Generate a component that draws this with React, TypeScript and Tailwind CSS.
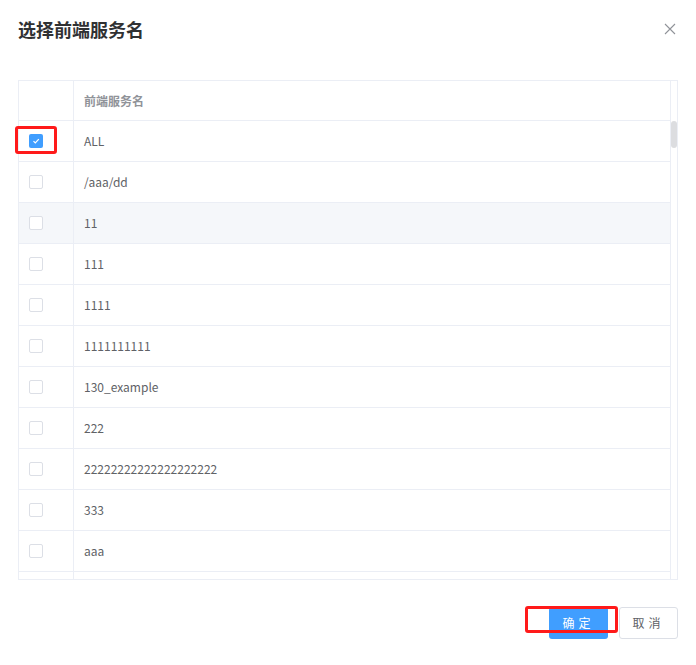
import { useState } from "react";

const rows = [
  "ALL",
  "/aaa/dd",
  "11",
  "111",
  "1111",
  "1111111111",
  "130_example",
  "222",
  "22222222222222222222",
  "333",
  "aaa",
  "",
];

function Checkbox({ checked }: { checked: boolean }) {
  if (checked) {
    return (
      <span className="flex h-[14px] w-[14px] items-center justify-center rounded-[2px] bg-[#409eff]">
        <svg width="10" height="10" viewBox="0 0 10 10" fill="none">
          <path d="M2.5 5.2 L4.3 7 L7.8 3.2" stroke="#fff" strokeWidth="1.2" />
        </svg>
      </span>
    );
  }
  return <span className="block h-[14px] w-[14px] rounded-[2px] border border-[#dcdfe6] bg-white" />;
}

export default function App() {
  const [selected] = useState<string[]>(["ALL"]);

  return (
    <div className="h-[665px] w-[696px] bg-white font-['Noto_Sans_CJK_SC','Noto_Sans',sans-serif] text-[#606266]">
      {/* header */}
      <div className="flex items-center justify-between px-[18px] pt-[16px]">
        <h2 className="text-[18px] font-bold leading-[26px] text-[#303133]">选择前端服务名</h2>
        <button className="mr-[2px] text-[#909399]">
          <svg width="12" height="12" viewBox="0 0 12 12" fill="none">
            <path d="M1 1 L11 11 M11 1 L1 11" stroke="currentColor" strokeWidth="1.1" />
          </svg>
        </button>
      </div>

      {/* table */}
      <div className="relative ml-[18px] mt-[38px] flex h-[500px] w-[660px] border border-[#ebeef5]">
        <div className="flex min-w-0 flex-1 flex-col">
          <div className="flex h-[40px] shrink-0 border-b border-[#ebeef5] text-[12px] font-bold text-[#909399]">
            <div className="w-[55px] shrink-0 border-r border-[#ebeef5]" />
            <div className="flex items-center px-[10px]">前端服务名</div>
          </div>
          <div className="flex-1 overflow-hidden">
            {rows.map((name, i) => (
              <div
                key={i}
                className={`flex h-[41px] border-b border-[#ebeef5] text-[12px] ${i === 2 ? "bg-[#f5f7fa]" : "bg-white"}`}
              >
                <div className="flex w-[55px] shrink-0 items-center border-r border-[#ebeef5] pl-[10px]">
                  <Checkbox checked={selected.includes(name)} />
                </div>
                <div className="flex items-center px-[10px]">{name}</div>
              </div>
            ))}
          </div>
        </div>
        <div className="w-[7px] shrink-0 border-l border-[#ebeef5] pt-[40px]">
          <div className="h-[27px] w-full rounded-[3px] bg-[#dcdde0]" />
        </div>
        {/* highlight around the checked box */}
        <span className="absolute left-[-4px] top-[45px] h-[28px] w-[42px] rounded-[3px] border-[3px] border-[#ff1a1a]" />
      </div>

      {/* footer */}
      <div className="relative mr-[18px] mt-[27px] flex justify-end gap-[11px]">
        <button className="h-[32px] w-[59px] rounded-[3px] bg-[#409eff] text-[12px] tracking-[4px] text-white">
          确定
        </button>
        <button className="h-[32px] w-[59px] rounded-[3px] border border-[#dcdfe6] bg-white text-[12px] tracking-[4px] text-[#606266]">
          取消
        </button>
        <span className="absolute right-[60px] top-[-1px] h-[27px] w-[93px] rounded-[3px] border-[3px] border-[#ff1a1a]" />
      </div>
    </div>
  );
}
